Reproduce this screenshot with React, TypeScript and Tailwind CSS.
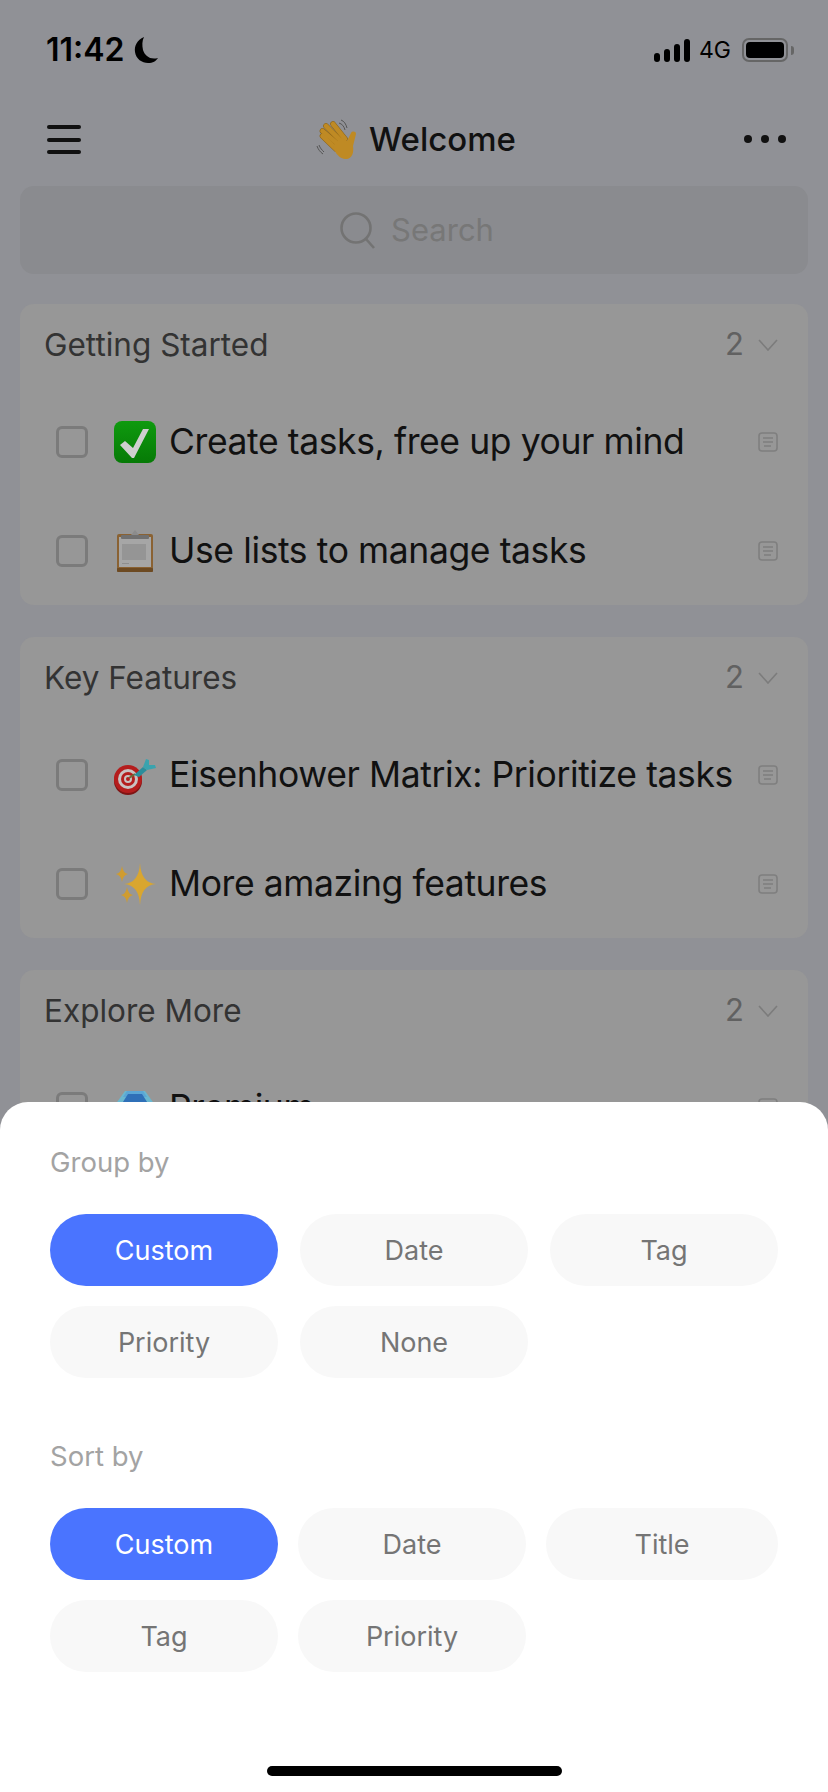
import React from 'react';

const star = (cx: number, cy: number, rx: number, ry: number) =>
  `M${cx} ${cy - ry}Q${cx + 1} ${cy - 1} ${cx + rx} ${cy}Q${cx + 1} ${cy + 1} ${cx} ${cy + ry}Q${cx - 1} ${cy + 1} ${cx - rx} ${cy}Q${cx - 1} ${cy - 1} ${cx} ${cy - ry}Z`;

const CheckEmoji = () => (
  <svg viewBox="0 0 42 42" className="w-full h-full">
    <defs>
      <linearGradient id="boxFill" x1="0" y1="0" x2="0" y2="1">
        <stop offset="0" stopColor="#0f9a0f" />
        <stop offset="1" stopColor="#067a06" />
      </linearGradient>
    </defs>
    <rect width="42" height="42" rx="8" fill="url(#boxFill)" />
    <path d="M6 24l5-4 8 7L29 8h6L20 37h-2z" fill="#cfcfcf" />
  </svg>
);

const ClipboardEmoji = () => (
  <svg viewBox="0 0 42 42" className="w-full h-full">
    <rect x="3" y="4" width="36" height="38" rx="2" fill="#8a6233" />
    <rect x="3" y="38" width="36" height="4" rx="1" fill="#6d4a22" />
    <rect x="5" y="7" width="32" height="30" fill="#a6a6a6" />
    <rect x="8" y="14" width="24" height="16" fill="#959595" />
    <rect x="8" y="33" width="7" height="1" fill="#8e8e8e" />
    <rect x="7" y="5" width="28" height="4" rx="1" fill="#707070" />
    <path d="M17 5l4-5 4 5z" fill="#8c8c8c" />
  </svg>
);

const DartEmoji = () => (
  <svg viewBox="0 0 42 42" className="w-full h-full">
    <circle cx="14" cy="27" r="14" fill="#7f1414" />
    <circle cx="14" cy="25" r="14" fill="#b51d1d" />
    <circle cx="14" cy="25" r="10" fill="#c9c2c2" />
    <circle cx="14" cy="25" r="7" fill="#b51d1d" />
    <circle cx="14" cy="25" r="4" fill="#c9c2c2" />
    <circle cx="14" cy="25" r="2" fill="#b51d1d" />
    <path d="M15 24l6-4" stroke="#6b6b3a" strokeWidth="2" />
    <path d="M20 21l9-8 4 3-8 7z" fill="#2b8d9b" />
    <path d="M29 13l3-8 3 1 0 5 6 0 1 3-9 2z" fill="#3aa3ae" />
  </svg>
);

const SparklesEmoji = () => (
  <svg viewBox="0 0 42 42" className="w-full h-full">
    <path d={star(26, 21, 16, 21)} fill="#d9a62f" />
    <path d={star(8, 11, 6, 8)} fill="#cf9c30" />
    <path d={star(13, 32, 6, 8)} fill="#cf9c30" />
  </svg>
);

const GemEmoji = () => (
  <svg viewBox="0 0 42 42" className="w-full h-full">
    <path d="M11 4h20l10 14-20 22L1 18z" fill="#6ab7cf" />
    <path d="M13 4h16l4 6H9z" fill="#5aa6d6" />
    <path d="M14 7h14l7 11H7z" fill="#2f70b8" />
  </svg>
);

const WaveEmoji = () => (
  <svg viewBox="0 0 42 42" className="w-full h-full">
    <g fill="none" strokeLinecap="round">
      <g stroke="#8a6216" strokeWidth="5.6">
        <path d="M18 5l12 15" />
        <path d="M11 7l16 16" />
        <path d="M7.500 12l16.500 14" />
        <path d="M7.500 17l13.500 13" />
      </g>
      <g stroke="#bf8a24" strokeWidth="4.6">
        <path d="M18 5l12 15" />
        <path d="M11 7l16 16" />
        <path d="M7.500 12l16.500 14" />
        <path d="M7.500 17l13.500 13" />
      </g>
    </g>
    <path d="M18 27c2 8 8 14 14 13 5-1 7-6 6-13l3-12c0-3-4-3-5-1l-4 8-6-3z" fill="#bf8a24" />
    <g fill="none" stroke="#555" strokeWidth="1">
      <path d="M24 4c3 1 5 3 6 7" />
      <path d="M26 1c3 1 5 4 6 8" />
      <path d="M2 27c1 3 3 6 6 8" />
      <path d="M4 26c1 3 3 5 5 7" />
    </g>
  </svg>
);

const NoteIcon = () => (
  <svg viewBox="0 0 20 20" className="w-5 h-5 shrink-0" fill="none" stroke="#7f7f7f" strokeWidth="1.6">
    <rect x="1" y="1" width="18" height="18" rx="3" />
    <path d="M5 6h10M5 10h10M6 14h7" />
  </svg>
);

const Chevron = () => (
  <svg viewBox="0 0 20 12" className="w-5 h-3" fill="none" stroke="#7c7c7c" strokeWidth="1.6">
    <path d="M1 1l9 10 9-10" />
  </svg>
);

const Task = ({ icon, title }: { icon: React.ReactNode; title: string }) => (
  <div className="h-[109px] flex items-center pl-9 pr-[30px]">
    <div className="w-8 h-8 shrink-0 rounded-md border-[3px] border-[#7b7b7b]" />
    <div className="w-[42px] h-[42px] shrink-0 ml-[26px] mr-[13px]">{icon}</div>
    <span className="flex-1 text-[35.5px] tracking-[-0.4px] leading-none text-[#111] whitespace-nowrap">{title}</span>
    <NoteIcon />
  </div>
);

const Group = ({ title, children }: { title: string; children: React.ReactNode }) => (
  <div className="bg-[#979797] rounded-[14px]">
    <div className="h-[83px] pb-[2px] flex items-center pl-6 pr-[30px]">
      <span className="flex-1 text-[31.5px] text-[#333]">{title}</span>
      <span className="text-[31px] text-[#616161] mr-[14px]">2</span>
      <Chevron />
    </div>
    {children}
  </div>
);

const Pill = ({ label, active }: { label: string; active?: boolean }) => (
  <div className={`h-[72px] pt-[2px] rounded-full flex items-center justify-center text-[27px] ${active ? 'bg-[#4a74ff] text-white' : 'bg-[#f8f8f8] text-[#757575]'}`}>
    {label}
  </div>
);

export default function App() {
  return (
    <div className="relative h-[1792px] w-[828px] overflow-hidden bg-[#909196] font-['Inter',sans-serif]">
      {/* status bar */}
      <div className="h-[100px] flex items-center pl-[46px] pr-[34px] text-black">
        <span className="text-[32px] font-semibold">11:42</span>
        <svg viewBox="0 0 24 26" className="w-6 h-[26px] ml-[9px]" fill="#000">
          <path d="M10 0C3 3 0 9 1 15c1 7 7 11 13 11 5 0 8-2 10-5-8 2-13-2-15-8C8 8 8 4 10 0z" />
        </svg>
        <div className="ml-auto flex items-end gap-1 h-[23px]">
          <div className="w-[6px] h-[9px] rounded-sm bg-black" />
          <div className="w-[6px] h-[13px] rounded-sm bg-black" />
          <div className="w-[6px] h-[18px] rounded-sm bg-black" />
          <div className="w-[6px] h-[23px] rounded-sm bg-black" />
        </div>
        <span className="ml-[9px] text-[23px] leading-none">4G</span>
        <div className="ml-[11px] w-[46px] h-6 rounded-[7px] border-[2px] border-[#666] p-[2px]">
          <div className="w-full h-full rounded-[4px] bg-black" />
        </div>
        <div className="ml-[3px] w-[3px] h-[9px] rounded-r-sm bg-[#666]" />
      </div>

      {/* title bar */}
      <div className="relative h-[80px] flex items-center justify-center">
        <div className="absolute left-[47px] top-[25px] w-[34px] flex flex-col gap-[8.5px]">
          <div className="h-1 rounded-full bg-[#111]" />
          <div className="h-1 rounded-full bg-[#111]" />
          <div className="h-1 rounded-full bg-[#111]" />
        </div>
        <div className="w-[42px] h-[42px] mr-[12px] ml-[3px]"><WaveEmoji /></div>
        <span className="text-[33px] font-[450] text-[#111]">Welcome</span>
        <div className="absolute left-[744px] top-[35px] flex gap-[9px]">
          <div className="w-2 h-2 rounded-full bg-[#111]" />
          <div className="w-2 h-2 rounded-full bg-[#111]" />
          <div className="w-2 h-2 rounded-full bg-[#111]" />
        </div>
      </div>

      {/* search */}
      <div className="mt-[6px] mx-5 h-[88px] pl-[6px] rounded-[14px] bg-[#8a8b8f] flex items-center justify-center">
        <svg viewBox="0 0 36 37" className="w-9 h-[37px] mr-[15px]" fill="none" stroke="#737373" strokeWidth="2.6">
          <circle cx="16" cy="16" r="14.5" />
          <path d="M26 27l8 9" />
        </svg>
        <span className="text-[31px] text-[#777]">Search</span>
      </div>

      {/* groups */}
      <div className="mt-[30px] mx-5 flex flex-col gap-8">
        <Group title="Getting Started">
          <Task icon={<CheckEmoji />} title="Create tasks, free up your mind" />
          <Task icon={<ClipboardEmoji />} title="Use lists to manage tasks" />
        </Group>
        <Group title="Key Features">
          <Task icon={<DartEmoji />} title="Eisenhower Matrix: Prioritize tasks" />
          <Task icon={<SparklesEmoji />} title="More amazing features" />
        </Group>
        <Group title="Explore More">
          <Task icon={<GemEmoji />} title="Premium" />
        </Group>
      </div>

      {/* bottom sheet */}
      <div className="absolute left-0 right-0 bottom-0 h-[690px] rounded-t-[28px] bg-white px-[50px] pt-[42px]">
        <div className="h-9 leading-9 text-[27.500px] text-[#a3a3a3]">Group by</div>
        <div className="mt-[34px] w-[728px] grid grid-cols-3 gap-x-[22px] gap-y-5">
          <Pill label="Custom" active />
          <Pill label="Date" />
          <Pill label="Tag" />
          <Pill label="Priority" />
          <Pill label="None" />
        </div>
        <div className="mt-[60px] h-9 leading-9 text-[27.500px] text-[#a3a3a3]">Sort by</div>
        <div className="mt-[34px] w-[728px] grid grid-cols-[228px_228px_232px] gap-x-5 gap-y-5">
          <Pill label="Custom" active />
          <Pill label="Date" />
          <Pill label="Title" />
          <Pill label="Tag" />
          <Pill label="Priority" />
        </div>
        <div className="mt-[94px] ml-[217px] w-[295px] h-[10px] rounded-full bg-black" />
      </div>
    </div>
  );
}
